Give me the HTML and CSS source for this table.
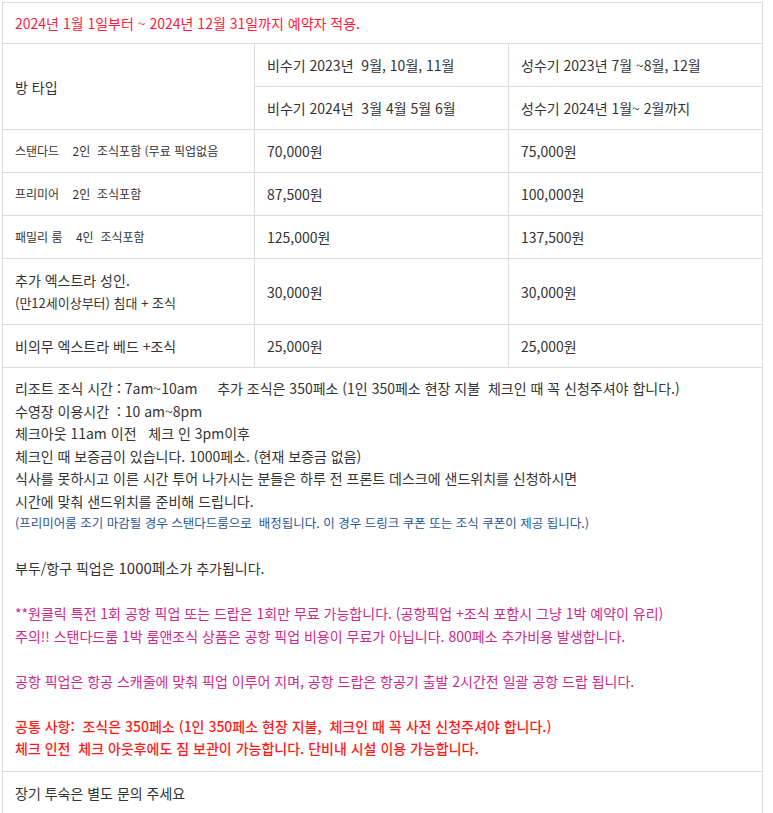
FILE: index.html
```html
<!DOCTYPE html>
<html lang="ko">
<head>
<meta charset="utf-8">
<link rel="stylesheet" href="styles.css">
</head>
<body>
<table class="rates">
  <colgroup><col class="c1"><col class="c2"><col class="c3"></colgroup>
  <tr><td colspan="3" class="period">2024년 1월 1일부터 ~ 2024년 12월 31일까지 예약자 적용.</td></tr>
  <tr><td rowspan="2">방 타입</td><td>비수기 2023년&nbsp; 9월, 10월, 11월</td><td>성수기 2023년 7월 ~8월, 12월</td></tr>
  <tr><td>비수기 2024년&nbsp; 3월 4월 5월 6월</td><td>성수기 2024년 1월~ 2월까지</td></tr>
  <tr><td class="xs">스탠다드&nbsp;&nbsp;&nbsp; 2인&nbsp; 조식포함 (무료 픽업없음</td><td>70,000원</td><td>75,000원</td></tr>
  <tr><td class="xs">프리미어&nbsp;&nbsp;&nbsp; 2인&nbsp; 조식포함</td><td>87,500원</td><td>100,000원</td></tr>
  <tr><td class="xs">패밀리 룸&nbsp;&nbsp;&nbsp; 4인&nbsp; 조식포함</td><td>125,000원</td><td>137,500원</td></tr>
  <tr><td>추가 엑스트라 성인.<br><span class="sm">(만12세이상부터) 침대 + 조식</span></td><td>30,000원</td><td>30,000원</td></tr>
  <tr><td>비의무 엑스트라 베드 +조식</td><td>25,000원</td><td>25,000원</td></tr>
  <tr><td colspan="3" class="notes">
    <div>리조트 조식 시간 : 7am~10am &nbsp;&nbsp;&nbsp; 추가 조식은 350페소 (1인 350페소 현장 지불&nbsp; 체크인 때 꼭 신청주셔야 합니다.)</div>
    <div>수영장 이용시간&nbsp; : 10 am~8pm</div>
    <div>체크아웃 11am 이전&nbsp;&nbsp; 체크 인 3pm이후</div>
    <div>체크인 때 보증금이 있습니다. 1000페소. (현재 보증금 없음)</div>
    <div>식사를 못하시고 이른 시간 투어 나가시는 분들은 하루 전 프론트 데스크에 샌드위치를 신청하시면</div>
    <div>시간에 맞춰 샌드위치를 준비해 드립니다.</div>
    <div class="blue">(프리미어룸 조기 마감될 경우 스탠다드룸으로&nbsp; 배정됩니다. 이 경우 드링크 쿠폰 또는 조식 쿠폰이 제공 됩니다.)</div>
    <div class="blank"></div>
    <div>부두/항구 픽업은 <span class="big">1000페소</span>가 추가됩니다.</div>
    <div class="blank"></div>
    <div class="pink">**원클릭 특전 1회 공항 픽업 또는 드랍은 1회만 무료 가능합니다. (공항픽업 +조식 포함시 그냥 1박 예약이 유리)</div>
    <div class="pink">주의!! 스탠다드룸 1박 룸앤조식 상품은 공항 픽업 비용이 무료가 아닙니다. 800페소 추가비용 발생합니다.</div>
    <div class="blank"></div>
    <div class="pink">공항 픽업은 항공 스캐줄에 맞춰 픽업 이루어 지며, 공항 드랍은 항공기 출발 2시간전 일괄 공항 드랍 됩니다.</div>
    <div class="blank"></div>
    <div class="red">공통 사항:&nbsp; 조식은 350페소 (1인 350페소 현장 지불,&nbsp; 체크인 때 꼭 사전 신청주셔야 합니다.)</div>
    <div class="red">체크 인전&nbsp; 체크 아웃후에도 짐 보관이 가능합니다. 단비내 시설 이용 가능합니다.</div>
  </td></tr>
  <tr><td colspan="3">장기 투숙은 별도 문의 주세요</td></tr>
</table>
</body>
</html>
```

FILE: styles.css
```css
html, body {
  margin: 0;
  padding: 0;
  background: #fff;
}
body {
  padding: 2px 0 0 2px;
  font-family: "Noto Sans CJK KR", "Noto Sans", sans-serif;
  color: #333;
}
.rates {
  border-collapse: collapse;
  width: 760px;
  table-layout: fixed;
}
.c1 { width: 252px; }
.c2 { width: 254px; }
.c3 { width: 254px; }
.rates td {
  border: 1px solid #dcdcdc;
  padding: 10px 12px;
  font-size: 14px;
  line-height: 22px;
  vertical-align: middle;
  white-space: nowrap;
}
.rates td.xs {
  font-size: 12px;
  padding-top: 10px;
  padding-bottom: 10px;
}
.sm {
  font-size: 13px;
}
.rates td.period {
  color: #ff1a3c;
  padding-top: 9px;
  padding-bottom: 9px;
}
.rates td.notes {
  line-height: 22.5px;
  padding-top: 9px;
  padding-bottom: 11px;
}
.blank { height: 22.5px; }
.blue {
  color: #2a5597;
  font-size: 12.5px;
}
.big { font-size: 15px; }
.pink { color: #cc2a8c; }
.red {
  color: #ff1a1a;
  font-weight: 500;
}
```
